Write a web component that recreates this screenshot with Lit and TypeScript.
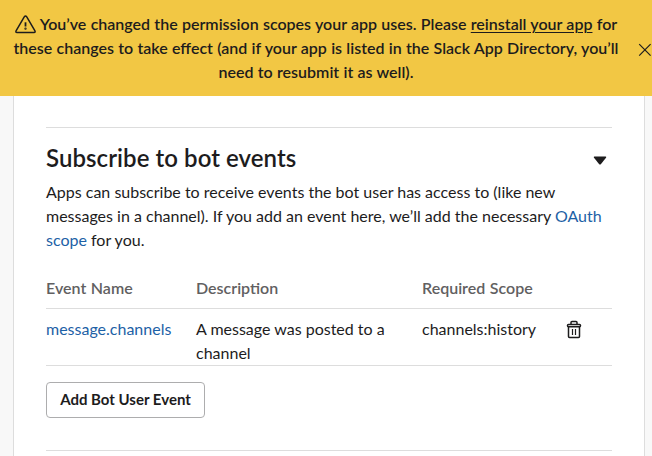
import { LitElement, html, css } from "lit";
import { customElement } from "lit/decorators.js";

@customElement("alert-banner")
class AlertBanner extends LitElement {
  static styles = css`
    :host { display: block; position: relative; height: 96px; box-sizing: border-box; padding: 12px 0;
      background: #f2c744; color: #1d1c1d; }
    .message { width: 632px; margin: 0; text-align: center; font-weight: 600; line-height: 24px; word-spacing: .28px; }
    .line { display: block; white-space: nowrap; }
    .link { color: inherit; text-decoration: underline; text-decoration-thickness: 1px; text-underline-offset: 2px; }
    .warn { width: 21px; height: 19px; vertical-align: -4px; margin-right: 4px; }
    .close { position: absolute; left: 638px; top: 43px; width: 14px; height: 14px; }
  `;
  render() {
    return html`
      <p class="message">
        <span class="line l1"><svg class="warn" viewBox="0 0 20 19" preserveAspectRatio="none" fill="none" stroke="#1d1c1d" stroke-width="1.4" stroke-linejoin="round" stroke-linecap="round"><path d="M8.8 1.9Q10 .2 11.2 1.9L19 15.9Q19.6 17.4 18.1 17.5H1.9Q.4 17.4 1 15.9Z"/><path d="M10 7.3v4.2" stroke-width="1.7" stroke-linecap="butt"/><circle cx="10" cy="13.7" r=".4"/></svg>You’ve changed the permission scopes your app uses. Please <a class="link">reinstall your app</a> for</span>
        <span class="line l2">these changes to take effect (and if your app is listed in the Slack App Directory, you’ll</span>
        <span class="line l3">need to resubmit it as well).</span>
      </p>
      <svg class="close" viewBox="0 0 14 14" stroke="#1d1c1d" stroke-width="1.2"><path d="M1.2 1.2l11.4 11.4M12.6 1.2L1.2 12.6"/></svg>
    `;
  }
}

@customElement("bot-events")
class BotEvents extends LitElement {
  static styles = css`
    :host { display: flow-root; box-sizing: border-box; margin: 31px 32px 0; border-top: 1px solid #dddddd; }
    .head { display: flex; justify-content: space-between; align-items: center; height: 28px; margin-top: 16px; }
    .title { margin: 0; font-size: 24px; line-height: 28px; font-weight: 600; letter-spacing: .06px; white-space: nowrap; }
    .caret { width: 14px; height: 9px; margin-right: 5px; margin-top: 4px; }
    .intro { margin: 8px 0 0; line-height: 24px; }
    .line { display: block; white-space: nowrap; }
    .link { color: #1d61a6; }
    .row { display: grid; grid-template-columns: 150px 226px 144px 46px; line-height: 24px; box-sizing: border-box;
      border-bottom: 1px solid #dddddd; }
    .header { height: 33px; margin-top: 24px; color: #616061; font-weight: 600; word-spacing: .6px; }
    .item { height: 57px; padding-top: 8px; white-space: nowrap; }
    .bin { width: 16px; height: 19px; margin-top: 3px; }
    .add { display: block; width: 159px; height: 36px; margin: 16px 0 32px; padding: 0 0 2px; border: 1px solid #adadae;
      border-radius: 4px; background: #fff; color: #1d1c1d; font: 700 15px Lato, sans-serif; white-space: nowrap; }
    .end { border-top: 1px solid #dddddd; }
  `;
  render() {
    return html`
      <div class="head">
        <h2 class="title">Subscribe to bot events</h2>
        <svg class="caret" viewBox="0 0 14 9" fill="#1d1c1d"><path d="M1.3 .5H12.7Q13.8 .8 13 1.8L8 7.9Q7 8.9 6 7.9L1 1.8Q.2 .8 1.3 .5Z"/></svg>
      </div>
      <p class="intro">
        <span class="line i1">Apps can subscribe to receive events the bot user has access to (like new</span>
        <span class="line i2">messages in a channel). If you add an event here, we’ll add the necessary <a class="link">OAuth</a></span>
        <span class="line i3"><a class="link">scope</a> for you.</span>
      </p>
      <div class="row header"><span class="h1">Event Name</span><span class="h2">Description</span><span class="h3">Required Scope</span></div>
      <div class="row item">
        <a class="link name">message.channels</a>
        <span class="desc">A message was posted to a<br>channel</span>
        <span class="scope">channels:history</span>
        <svg class="bin" viewBox="0 0 16 19" fill="none" stroke="#1d1c1d" stroke-width="1.5"><path d="M5 4V2.5Q5 1.5 6 1.5H10Q11 1.5 11 2.5V4M2.5 7V16.6Q2.5 17.5 3.5 17.5H12.5Q13.5 17.5 13.5 16.6V7"/><rect x="1.5" y="4.4" width="13" height="2.4" rx="1"/><path d="M6.5 9v6M9.5 9v6" stroke-width="1.2"/></svg>
      </div>
      <button class="add">Add Bot User Event</button>
      <div class="end"></div>
    `;
  }
}

@customElement("app-root")
class AppRoot extends LitElement {
  static styles = css`
    :host { display: flex; flex-direction: column; height: 456px; overflow: hidden; background: #f8f8f8;
      color: #1d1c1d; font: 400 16px Lato, sans-serif; }
    .card { flex: 1; box-sizing: border-box; margin: 0 7px 0 13px; background: #fff; border: solid #dddddd; border-width: 0 1px; display: flow-root; }
  `;
  render() {
    return html`<alert-banner></alert-banner><main class="card"><bot-events></bot-events></main>`;
  }
}
